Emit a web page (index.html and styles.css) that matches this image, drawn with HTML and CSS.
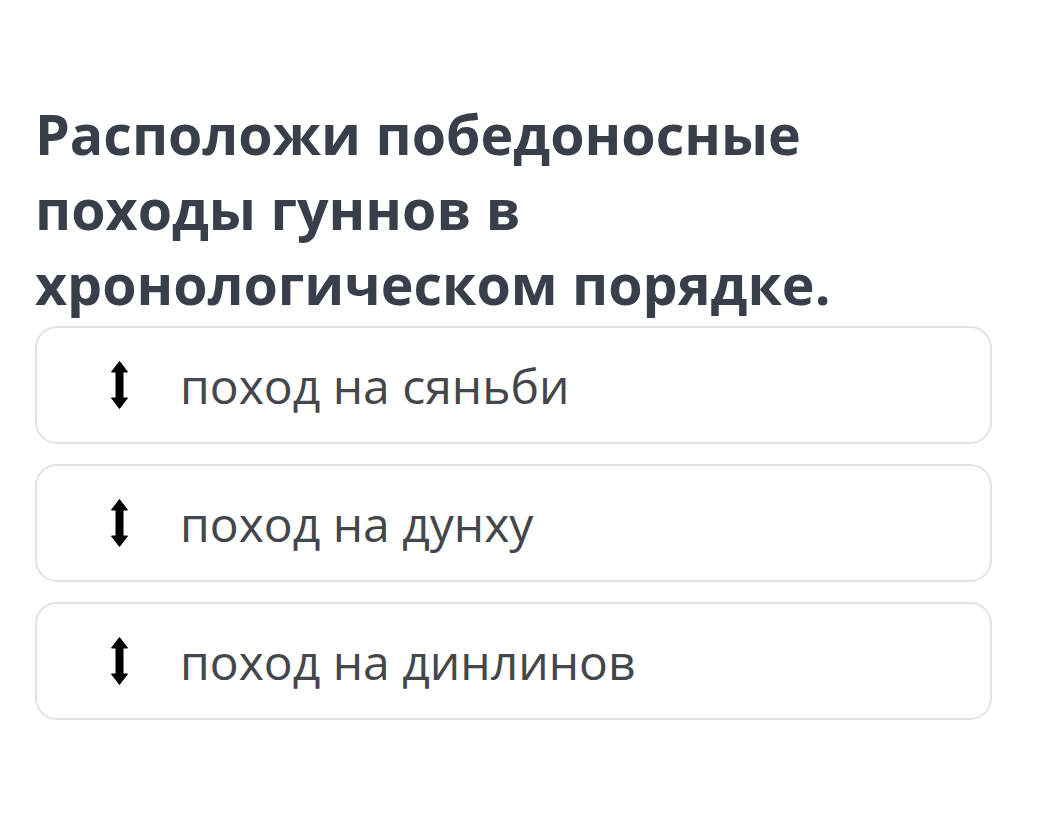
FILE: index.html
```html
<!DOCTYPE html>
<html lang="ru">
<head>
<meta charset="utf-8">
<link rel="stylesheet" href="styles.css">
</head>
<body>
<div class="page">
  <h1 class="title">Расположи победоносные походы гуннов в хронологическом порядке.</h1>
  <div class="list">
    <div class="item"><span class="handle"><svg width="17" height="48" viewBox="0 0 17 48"><path d="M8.5 0.5 L16.5 11 L12 11 L12 37 L16.5 37 L8.5 47.5 L0.5 37 L5 37 L5 11 L0.5 11 Z" fill="#000" stroke="#000" stroke-width="1" stroke-linejoin="round"/></svg></span><span class="label">поход на сяньби</span></div>
    <div class="item"><span class="handle"><svg width="17" height="48" viewBox="0 0 17 48"><path d="M8.5 0.5 L16.5 11 L12 11 L12 37 L16.5 37 L8.5 47.5 L0.5 37 L5 37 L5 11 L0.5 11 Z" fill="#000" stroke="#000" stroke-width="1" stroke-linejoin="round"/></svg></span><span class="label">поход на дунху</span></div>
    <div class="item"><span class="handle"><svg width="17" height="48" viewBox="0 0 17 48"><path d="M8.5 0.5 L16.5 11 L12 11 L12 37 L16.5 37 L8.5 47.5 L0.5 37 L5 37 L5 11 L0.5 11 Z" fill="#000" stroke="#000" stroke-width="1" stroke-linejoin="round"/></svg></span><span class="label">поход на динлинов</span></div>
  </div>
</div>
</body>
</html>
```
FILE: styles.css
```css
html, body {
  margin: 0;
  padding: 0;
  background: #ffffff;
}
.page {
  padding: 96px 61px 0 35px;
  font-family: "Open Sans", "Noto Sans", sans-serif;
}
.title {
  margin: 0;
  font-size: 55.5px;
  line-height: 75px;
  font-weight: 700;
  color: #393f4a;
  max-width: 900px;
}
.list {
  display: flex;
  flex-direction: column;
  gap: 20px;
  margin-top: 5px;
}
.item {
  display: flex;
  align-items: center;
  border: 2px solid #e3e3e3;
  border-radius: 22px;
  box-sizing: border-box;
  height: 118px;
}
.handle {
  display: flex;
  width: 17px;
  margin-left: 74px;
  margin-right: 52px;
}
.label {
  font-size: 48px;
  color: #43464b;
}
```
